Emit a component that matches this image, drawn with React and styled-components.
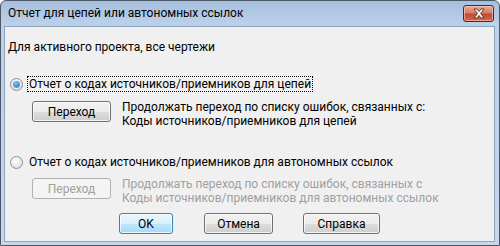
import React from "react";
import styled, { createGlobalStyle } from "styled-components";

const Global = createGlobalStyle`
  html, body { margin: 0; padding: 0; background: #ffffff; }
  body { font-family: Roboto, "Noto Sans", sans-serif; font-size: 12px; color: #000; }
`;

const Window = styled.div`
  box-sizing: border-box;
  width: 500px;
  height: 246px;
  display: flex;
  flex-direction: column;
  border: 1px solid #4a5866;
  border-radius: 6px 6px 0 0;
  background: linear-gradient(to bottom, #a6bfdd 0px, #bcd1ea 24px, #c6d8ee 100%);
  overflow: hidden;
`;

const TitleBar = styled.div`
  height: 24px;
  display: flex;
  align-items: center;
  justify-content: space-between;
  padding: 0 5px 0 7px;
  flex: none;
`;

const Title = styled.span`
  font-size: 12px;
  color: #000;
`;

const CloseButton = styled.div`
  box-sizing: border-box;
  width: 31px;
  height: 17px;
  margin-top: 1px;
  border: 1px solid #5a2218;
  border-radius: 3px;
  background: linear-gradient(to bottom, #e9a99b 0%, #d67e6b 45%, #c24b33 55%, #cf6a4c 100%);
  box-shadow: inset 0 0 0 1px rgba(255, 220, 210, 0.55);
  display: flex;
  align-items: center;
  justify-content: center;
`;

const Client = styled.div`
  flex: 1;
  margin: 1px 4px 3px 3px;
  background: #f0f0f0;
  border: 1px solid #8da2bb;
  display: flex;
  flex-direction: column;
  padding: 12px 0 0 3px;
  font-size: 12px;
`;

const Header = styled.div`
  line-height: 16px;
  height: 16px;
`;

const RadioRow = styled.div`
  display: flex;
  align-items: center;
  gap: 4px;
  height: 16px;
  margin-top: ${(p) => p.$top}px;
  padding-left: 2px;
`;

const RadioCircle = styled.span`
  box-sizing: border-box;
  width: 13px;
  height: 13px;
  border-radius: 50%;
  border: 1px solid #8f8f8f;
  background: radial-gradient(circle at 40% 35%, #ffffff 0%, #e6e6e6 60%, #d0d0d0 100%);
  display: flex;
  align-items: center;
  justify-content: center;
  flex: none;
`;

const RadioDot = styled.span`
  width: 5px;
  height: 5px;
  border-radius: 50%;
  background: radial-gradient(circle at 40% 35%, #8fd0ff 0%, #2a86d8 60%, #1a5ea8 100%);
  box-shadow: 0 0 0 1px #5f9bd6;
`;

const RadioLabel = styled.span`
  line-height: 14px;
  padding: 0 1px;
  border: 1px dotted ${(p) => (p.$focus ? "#000" : "transparent")};
`;

const ActionRow = styled.div`
  display: flex;
  align-items: flex-start;
  gap: 11px;
  margin-top: ${(p) => p.$top}px;
  padding-left: 24px;
`;

const Button = styled.div`
  box-sizing: border-box;
  width: ${(p) => p.$w}px;
  height: 21px;
  border-radius: 3px;
  border: 1px solid ${(p) => (p.$disabled ? "#adb2b5" : p.$default ? "#3c7fb1" : "#707070")};
  background: ${(p) =>
    p.$disabled
      ? "#f4f4f4"
      : p.$default
      ? "linear-gradient(to bottom, #eaf6fd 0%, #d9f0fc 50%, #bee6fd 51%, #a7d9f5 100%)"
      : "linear-gradient(to bottom, #f2f2f2 0%, #ebebeb 50%, #dddddd 51%, #cfcfcf 100%)"};
  box-shadow: inset 0 0 0 1px ${(p) => (p.$disabled ? "transparent" : "rgba(255,255,255,0.75)")};
  color: ${(p) => (p.$disabled ? "#a0a0a0" : "#000")};
  display: flex;
  align-items: center;
  justify-content: center;
  font-size: 12px;
  flex: none;
`;

const Description = styled.div`
  line-height: 14px;
  margin-top: -1px;
  color: ${(p) => (p.$disabled ? "#a0a0a0" : "#000")};
`;

const Footer = styled.div`
  display: flex;
  margin-top: 8px;
  padding-left: 111px;
`;

const FooterGap = styled.div`
  width: ${(p) => p.$w}px;
`;

function CloseGlyph() {
  return (
    <svg width="14" height="11" viewBox="0 0 14 11">
      <path
        d="M2 1 L5 1 L7 3.5 L9 1 L12 1 L8.6 5.5 L12 10 L9 10 L7 7.5 L5 10 L2 10 L5.4 5.5 Z"
        fill="#ffffff"
        stroke="#5a2a22"
        strokeWidth="0.9"
        strokeLinejoin="round"
      />
    </svg>
  );
}

export default function App() {
  return (
    <>
      <Global />
      <Window>
        <TitleBar>
          <Title>Отчет для цепей или автономных ссылок</Title>
          <CloseButton>
            <CloseGlyph />
          </CloseButton>
        </TitleBar>
        <Client>
          <Header>Для активного проекта, все чертежи</Header>
          <RadioRow $top={21}>
            <RadioCircle>
              <RadioDot />
            </RadioCircle>
            <RadioLabel $focus>Отчет о кодах источников/приемников для цепей</RadioLabel>
          </RadioRow>
          <ActionRow $top={9}>
            <Button $w={79}>Переход</Button>
            <Description>
              Продолжать переход по списку ошибок, связанных с:
              <br />
              Коды источников/приемников для цепей
            </Description>
          </ActionRow>
          <RadioRow $top={26}>
            <RadioCircle />
            <RadioLabel>Отчет о кодах источников/приемников для автономных ссылок</RadioLabel>
          </RadioRow>
          <ActionRow $top={8}>
            <Button $w={79} $disabled>
              Переход
            </Button>
            <Description $disabled>
              Продолжать переход по списку ошибок, связанных с
              <br />
              Коды источников/приемников для автономных ссылок
            </Description>
          </ActionRow>
          <Footer>
            <Button $w={54} $default>
              OK
            </Button>
            <FooterGap $w={31} />
            <Button $w={69}>Отмена</Button>
            <FooterGap $w={30} />
            <Button $w={77}>Справка</Button>
          </Footer>
        </Client>
      </Window>
    </>
  );
}
